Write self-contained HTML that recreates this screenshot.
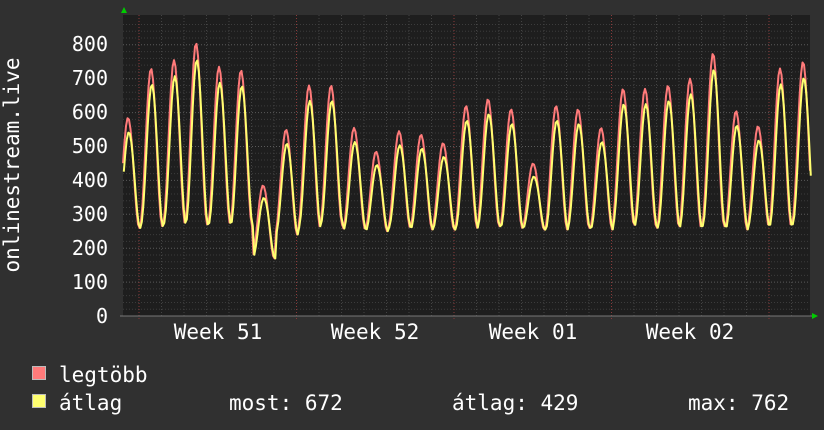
<!DOCTYPE html>
<html><head><meta charset="utf-8"><style>
body{margin:0;background:#303030;width:824px;height:430px;overflow:hidden}
svg{display:block}
text{font-family:"DejaVu Sans Mono","Liberation Mono",monospace;fill:#fff}
</style></head><body>
<svg id="s" width="824" height="430" xmlns="http://www.w3.org/2000/svg">
<rect x="0" y="0" width="824" height="430" fill="#303030"/>
<rect x="123" y="15" width="687" height="301" fill="#1e1e1e"/>
<g id="grid"></g>
<path id="red" fill="none" stroke="#ff7a7a" stroke-width="2" stroke-linejoin="round"/>
<path id="yel" fill="none" stroke="#ffff70" stroke-width="2" stroke-linejoin="round"/>
<polygon points="121,13 127,13 124,7" fill="#0c0"/>
<polygon points="812,313 812,319 818,316" fill="#0c0"/>
<g font-size="20" text-anchor="end">
<text x="108" y="323">0</text><text x="108" y="289">100</text><text x="108" y="255">200</text>
<text x="108" y="221">300</text><text x="108" y="187">400</text><text x="108" y="153">500</text>
<text x="108" y="119">600</text><text x="108" y="85">700</text><text x="108" y="51">800</text>
</g>
<text transform="translate(19,165) rotate(-90)" font-size="21" text-anchor="middle">onlinestream.live</text>
<g font-size="21" text-anchor="middle">
<text x="218" y="339">Week 51</text><text x="375" y="339">Week 52</text>
<text x="533" y="339">Week 01</text><text x="690" y="339">Week 02</text>
</g>
<rect x="32.5" y="366.5" width="13" height="13" fill="#ff7a7a" stroke="#bbb"/>
<rect x="32.5" y="394.5" width="13" height="13" fill="#ffff70" stroke="#bbb"/>
<g font-size="21">
<text x="59" y="382">legtöbb</text>
<text x="59" y="410">átlag</text>
<text x="229" y="410">most: 672</text>
<text x="452" y="410">átlag: 429</text>
<text x="688" y="410">max: 762</text>
</g>
</svg>
<script>
var g=document.getElementById('grid'),h='';
function Y(v){return 316-v*0.339;}
for(var v=20;v<=860;v+=20){var y=Y(v);if(y<15)break;var maj=v%100==0;
h+='<line x1="123" x2="810" y1="'+y+'" y2="'+y+'" stroke="'+(maj?'#5a5a5a':'#3c3c3c')+'" stroke-dasharray="1,2"/>';}
for(var x=139-22.5;x<810;x+=22.5){if(x<123)continue;
h+='<line y1="15" y2="316" x1="'+x+'" x2="'+x+'" stroke="#444" stroke-dasharray="1,2"/>';}
[139,296.5,454,611.5,769].forEach(function(x){h+='<line y1="15" y2="319" x1="'+x+'" x2="'+x+'" stroke="#8a3a3a" stroke-dasharray="1,2"/>';});
h+='<line x1="120" x2="812" y1="316" y2="316" stroke="#777"/>';
g.innerHTML=h;
var P=[[128,585],[151,730],[174,755],[196,805],[219,735],[241,725],[263,385],[286,550],[309,680],[331,680],[354,555],[376,485],[399,545],[421,535],[443,510],[466,620],[488,640],[511,610],[533,450],[556,620],[578,610],[601,555],[623,670],[645,670],[668,680],[690,700],[713,775],[736,605],[758,560],[780,730],[803,750]];
var T=[260,265,270,270,270,265,170,240,260,270,255,250,260,255,255,260,265,260,255,255,260,255,265,265,260,260,265,255,260,265,270];
function build(s,off){var d='';for(var x=123;x<=810;x+=1.5){
var i=0,best=1e9;for(var k=0;k<P.length;k++){var dd=Math.abs(x-P[k][0]);if(dd<best){best=dd;i=k;}}
var dx=x-P[i][0];var t=Math.min(1,Math.abs(dx)/11.25);
var f=Math.pow((1+Math.cos(Math.PI*t))/2,1.0);
var tr=T[i];var pk=P[i][1]*s-(s<1?25:0);
var v=tr+(pk-tr)*f+(dx>0?40*f*(1-f):0);
d+=(d?'L':'M')+(x+off).toFixed(1)+','+Y(v).toFixed(1);}
return d;}
document.getElementById('red').setAttribute('d',build(1,0));
document.getElementById('yel').setAttribute('d',build(0.97,0.8));
</script>
</body></html>
